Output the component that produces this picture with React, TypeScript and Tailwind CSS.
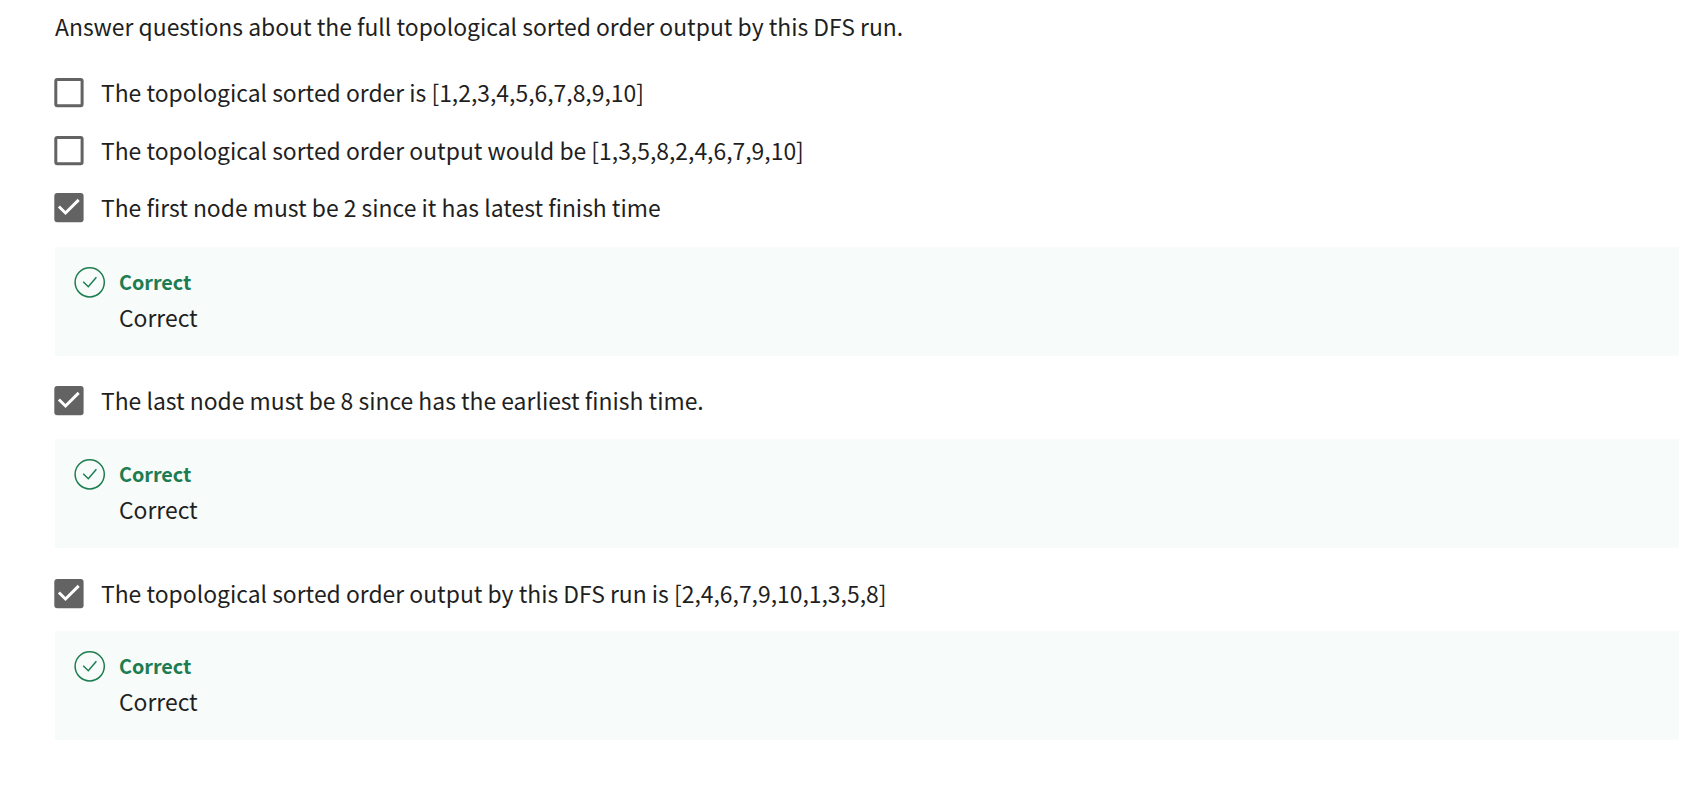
import React from "react";

function Box({ checked }: { checked: boolean }) {
  return (
    <svg width="30" height="32" viewBox="0 0 30 32" className="-ml-px shrink-0">
      {checked ? (
        <>
          <rect x="0.3" y="2" width="29.3" height="29.2" rx="3" fill="#636363" />
          <path d="M4.9 15.5L11.5 22L24.7 8.9" fill="none" stroke="#fff" strokeWidth="2.9" />
        </>
      ) : (
        <rect x="1.8" y="3.5" width="26.3" height="26.2" rx="1.5" fill="none" stroke="#636363" strokeWidth="3" />
      )}
    </svg>
  );
}

function Option({ text, checked = false }: { text: string; checked?: boolean }) {
  return (
    <div className="flex h-[58px] items-center gap-[17px]">
      <Box checked={checked} />
      <span className="leading-[58px] whitespace-nowrap">{text}</span>
    </div>
  );
}

function Feedback() {
  return (
    <div className="flex h-[109px] gap-[13px] bg-[#f7fbf9] pt-[19px] pl-[19px]">
      <svg width="32" height="32" viewBox="0 0 32 32" fill="none" stroke="#1d7c50" strokeWidth="1.5">
        <circle cx="15.7" cy="16.3" r="14.6" />
        <path d="M9.2 15.7L14.3 20.7L22.4 11.3" />
      </svg>
      <div>
        <div className="text-[19.8px] leading-[31px] font-bold text-[#1d7c50]">Correct</div>
        <div className="leading-[40px]">Correct</div>
      </div>
    </div>
  );
}

export default function App() {
  return (
    <main className="h-[787px] overflow-hidden bg-white pr-[16px] pl-[55px] font-['Noto_Sans_CJK_SC',sans-serif] text-[22.9px] text-[#1f1f1f]">
      <p className="h-[63px] leading-[52px]">Answer questions about the full topological sorted order output by this DFS run.</p>
      <Option text="The topological sorted order is [1,2,3,4,5,6,7,8,9,10]" />
      <Option text="The topological sorted order output would be [1,3,5,8,2,4,6,7,9,10]" />
      <div className="-mt-px flex flex-col gap-[11px]">
        <Option checked text="The first node must be 2 since it has latest finish time" />
        <Feedback />
      </div>
      <div className="mt-[15px] flex flex-col gap-[10px]">
        <Option checked text="The last node must be 8 since has the earliest finish time." />
        <Feedback />
      </div>
      <div className="mt-[16px] flex flex-col gap-[9px]">
        <Option checked text="The topological sorted order output by this DFS run is [2,4,6,7,9,10,1,3,5,8]" />
        <Feedback />
      </div>
    </main>
  );
}
